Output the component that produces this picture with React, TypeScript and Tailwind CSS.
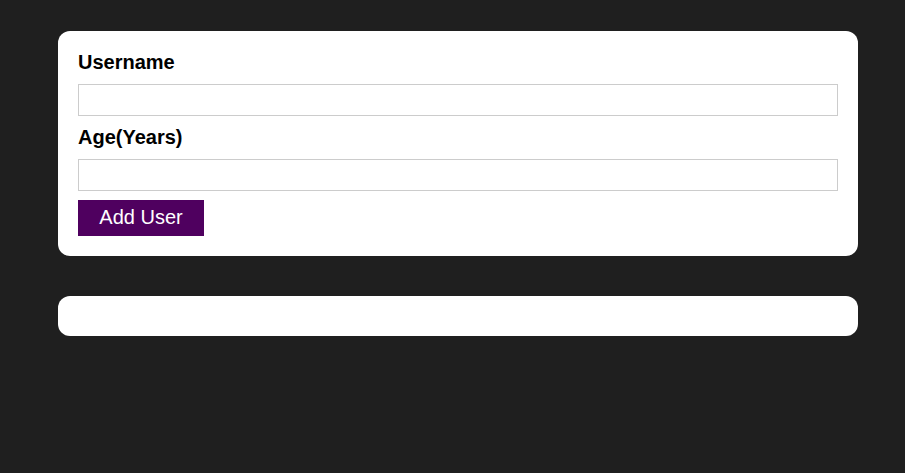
import React from "react";

const font = { fontFamily: '"Liberation Sans", Arial, sans-serif' };

const App = () => {
  return (
    <div className="min-h-[473px] bg-[#1f1f1f] pt-[31px]" style={font}>
      <form
        className="ml-[58px] w-[800px] rounded-xl bg-white px-5 pt-5 pb-5"
        onSubmit={(e) => e.preventDefault()}
      >
        <label htmlFor="username" className="mb-[10px] block text-[20px] font-bold leading-[23px] text-black">
          Username
        </label>
        <input
          id="username"
          type="text"
          className="mb-[10px] block h-[32px] w-full border border-[#cccccc] px-1 outline-none"
        />
        <label htmlFor="age" className="mb-[10px] block text-[20px] font-bold leading-[23px] text-black">
          Age(Years)
        </label>
        <input
          id="age"
          type="number"
          className="mb-[9px] block h-[32px] w-full border border-[#cccccc] px-1 outline-none"
        />
        <button
          type="submit"
          className="block h-[36px] w-[126px] bg-[#4f005f] pb-[2px] text-[20px] leading-none text-white"
        >
          Add User
        </button>
      </form>
      <div className="ml-[58px] mt-[40px] h-[40px] w-[800px] rounded-xl bg-white" />
    </div>
  );
};

export default App;
